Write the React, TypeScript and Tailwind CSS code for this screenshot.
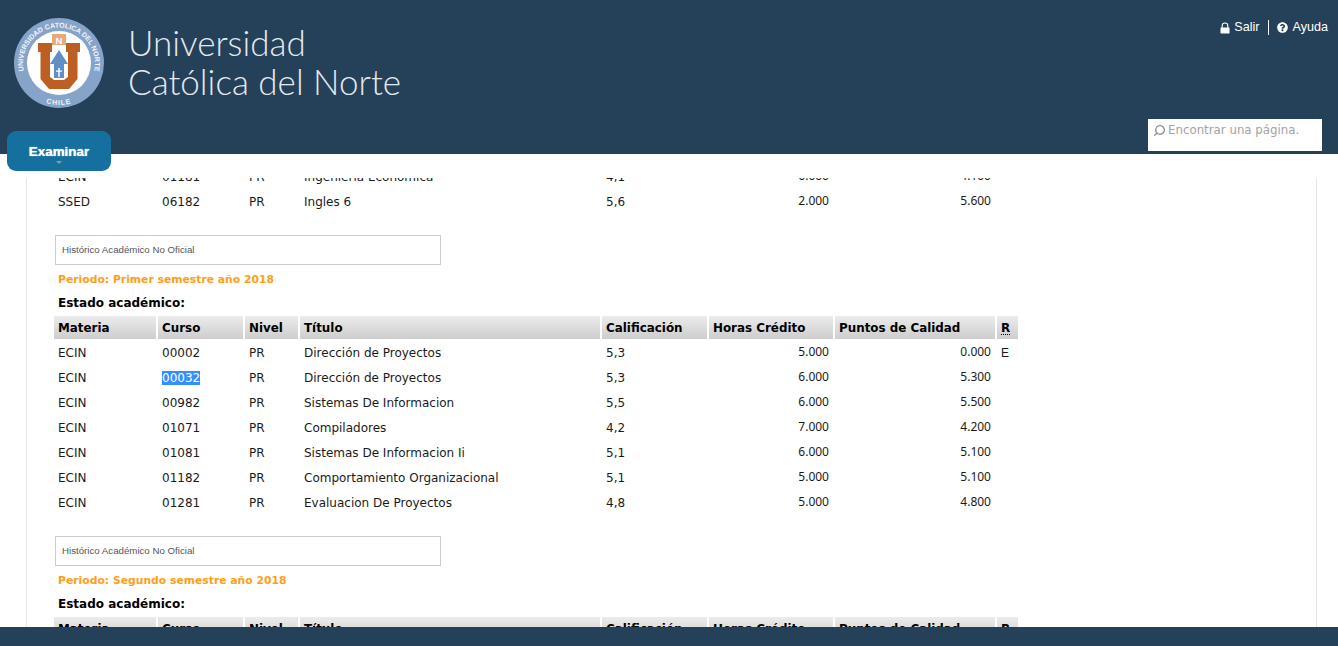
import { FaQuestionCircle } from "react-icons/fa"
import { Search } from "lucide-react"

type Row = {
  materia: string
  curso: string
  titulo: string
  nota: string
  horas: string
  puntos: string
  r?: string
  selected?: boolean
}

const topRows: Row[] = [
  { materia: "ECIN", curso: "01181", titulo: "Ingeniería Económica", nota: "4,1", horas: "6.000", puntos: "4.100" },
  { materia: "SSED", curso: "06182", titulo: "Ingles 6", nota: "5,6", horas: "2.000", puntos: "5.600" },
]

const rows2018: Row[] = [
  { materia: "ECIN", curso: "00002", titulo: "Dirección de Proyectos", nota: "5,3", horas: "5.000", puntos: "0.000", r: "E" },
  { materia: "ECIN", curso: "00032", titulo: "Dirección de Proyectos", nota: "5,3", horas: "6.000", puntos: "5.300", selected: true },
  { materia: "ECIN", curso: "00982", titulo: "Sistemas De Informacion", nota: "5,5", horas: "6.000", puntos: "5.500" },
  { materia: "ECIN", curso: "01071", titulo: "Compiladores", nota: "4,2", horas: "7.000", puntos: "4.200" },
  { materia: "ECIN", curso: "01081", titulo: "Sistemas De Informacion Ii", nota: "5,1", horas: "6.000", puntos: "5.100" },
  { materia: "ECIN", curso: "01182", titulo: "Comportamiento Organizacional", nota: "5,1", horas: "5.000", puntos: "5.100" },
  { materia: "ECIN", curso: "01281", titulo: "Evaluacion De Proyectos", nota: "4,8", horas: "5.000", puntos: "4.800" },
]

const headers = ["Materia", "Curso", "Nivel", "Título", "Calificación", "Horas Crédito", "Puntos de Calidad"]

function Logo() {
  return (
    <svg width="92" height="92" viewBox="0 0 92 92" className="shrink-0">
      <defs>
        <path id="arcTop" d="M 20 71.5 A 36 36 0 1 1 72 71.5" />
        <path id="arcBottom" d="M 25 82.4 A 42 42 0 0 0 67 82.4" />
      </defs>
      <circle cx="46" cy="46" r="45" fill="#86a3c9" />
      <circle cx="46" cy="46" r="32" fill="#ffffff" />
      <text fill="#f2f5f9" fontSize="7" fontWeight="700" fontFamily="'Liberation Sans', sans-serif">
        <textPath href="#arcTop" startOffset="50%" textAnchor="middle">UNIVERSIDAD CATOLICA DEL NORTE</textPath>
      </text>
      <text fill="#f2f5f9" fontSize="7" fontWeight="700" letterSpacing="1" fontFamily="'Liberation Sans', sans-serif">
        <textPath href="#arcBottom" startOffset="50%" textAnchor="middle">CHILE</textPath>
      </text>
      <path d="M39 17h14v11H39z" fill="#e8a878" />
      <text x="46" y="26.5" textAnchor="middle" fill="#ffffff" fontSize="9.5" fontWeight="700" fontFamily="'Liberation Sans', sans-serif">N</text>
      <path
        d="M25 26H39V35H37V60L41 63H51L55 60V35H53V26H67V35H64.5V62L56 72H36L27.5 62V35H25Z"
        fill="#bd5f22"
      />
      <path d="M46 33L55 47H51V61H41V47H37Z" fill="#5f8fc4" />
      <path d="M45.3 51h1.4v2.5h2.3v1.3h-2.3V60h-1.4v-5.2H43v-1.3h2.3z" fill="#ffffff" />
    </svg>
  )
}

function LockIcon() {
  return (
    <svg width="10" height="12" viewBox="0 0 10 12">
      <path d="M2.2 6V3.8a2.8 2.8 0 0 1 5.6 0V6" fill="none" stroke="#ffffff" strokeWidth="1.1" />
      <rect x="0.5" y="5.5" width="9" height="6" rx="0.6" fill="#ffffff" />
    </svg>
  )
}

function GradeTable({ rows, withHeader = true }: { rows: Row[]; withHeader?: boolean }) {
  return (
    <table className="w-[968px] table-fixed border-separate border-spacing-[2px] text-[12px] text-[#1a1a1a] font-['DejaVu_Sans',sans-serif]">
      <colgroup>
        <col className="w-[102px]" />
        <col className="w-[85px]" />
        <col className="w-[53px]" />
        <col className="w-[300px]" />
        <col className="w-[105px]" />
        <col className="w-[124px]" />
        <col className="w-[160px]" />
        <col className="w-[21px]" />
      </colgroup>
      {withHeader && (
        <thead>
          <tr className="h-[23px]">
            {headers.map((h) => (
              <th key={h} className="bg-gradient-to-b from-[#ececec] to-[#cdcdcd] px-1 pt-[2px] text-left text-[11.9px] font-bold text-black">
                {h}
              </th>
            ))}
            <th className="bg-gradient-to-b from-[#ececec] to-[#cdcdcd] px-1 pt-[2px] text-left text-[11.9px] font-bold text-black">
              <span className="underline decoration-dotted underline-offset-2">R</span>
            </th>
          </tr>
        </thead>
      )}
      <tbody>
        {rows.map((row) => (
          <tr key={row.curso} className="h-[23px]">
            <td className="px-1">{row.materia}</td>
            <td className="px-1">
              {row.selected ? <span className="bg-[#3390ff] text-white">{row.curso}</span> : row.curso}
            </td>
            <td className="px-1">PR</td>
            <td className="px-1">{row.titulo}</td>
            <td className="px-1">{row.nota}</td>
            <td className="px-1 pb-[2px] text-right font-['Noto_Sans',sans-serif]">{row.horas}</td>
            <td className="px-1 pb-[2px] text-right font-['Noto_Sans',sans-serif]">{row.puntos}</td>
            <td className="px-1 font-['Liberation_Sans',sans-serif]">{row.r}</td>
          </tr>
        ))}
      </tbody>
    </table>
  )
}

function Period({ title }: { title: string }) {
  return (
    <>
      <div className="ml-[28px] flex h-[30px] w-[386px] items-center border border-[#cccccc] pl-[6px] font-['Liberation_Sans',sans-serif] text-[9.7px] text-[#555555]">
        Histórico Académico No Oficial
      </div>
      <p className="ml-[31px] mt-[8px] font-['DejaVu_Sans',sans-serif] text-[10.8px] leading-[14px] font-bold text-[#ff9e18]">
        {title}
      </p>
      <p className="ml-[31px] mt-[9px] font-['DejaVu_Sans',sans-serif] text-[12px] leading-[14px] font-bold text-black">
        Estado académico:
      </p>
    </>
  )
}

export default function App() {
  return (
    <div className="relative flex h-[646px] w-[1338px] flex-col overflow-hidden bg-white">
      <header className="flex h-[154px] shrink-0 justify-between bg-[#254059]">
        <div className="flex items-start pl-[13px] pt-[17px]">
          <Logo />
          <div className="ml-[23px] mt-[6px] font-['Lato',sans-serif] text-[35px] leading-[39px] font-light text-[#e3e9ee]">
            <div>Universidad</div>
            <div>Católica del Norte</div>
          </div>
        </div>
        <div className="flex flex-col items-end justify-between pr-[10px] pb-[3px] pt-[20px]">
          <div className="flex h-[15px] items-center font-['Liberation_Sans',sans-serif] text-[12.6px] text-white">
            <LockIcon />
            <span className="ml-[4px]">Salir</span>
            <span className="mx-[8px] h-[15px] w-px bg-white" />
            <FaQuestionCircle className="h-[11px] w-[11px]" />
            <span className="ml-[5px]">Ayuda</span>
          </div>
          <div className="mr-[6px] flex h-[32px] w-[174px] items-start bg-white pl-[5px] pt-[4px]">
            <Search className="mt-[1px] h-[13px] w-[13px] shrink-0 -scale-x-100 text-[#8f8f8f]" strokeWidth={2.6} />
            <input
              placeholder="Encontrar una página."
              className="ml-[2px] w-[150px] bg-transparent font-['DejaVu_Sans',sans-serif] text-[11.8px] leading-[14px] outline-none placeholder:text-[#a3a3a3]"
            />
          </div>
        </div>
      </header>

      <button className="absolute left-[7px] top-[131px] h-[40px] w-[104px] rounded-[9px] bg-[#15709f] pt-[2px] font-['Liberation_Sans',sans-serif] text-[13.4px] font-bold text-white [text-shadow:0_0_1px_#ffffff]">
        Examinar
        <span className="absolute left-[49px] top-[30px] h-0 w-0 border-x-[3px] border-t-[3px] border-x-transparent border-t-[#8a9aa8]" />
      </button>

      <main className="min-h-0 flex-1 pt-[24px]">
        <div className="ml-[26px] mr-[21px] h-full overflow-hidden border-x border-[#e5e5e5]">
          <div className="-mt-[15px] pl-[25px]">
            <GradeTable rows={topRows} withHeader={false} />
          </div>
          <div className="mt-[20px]">
            <Period title="Periodo: Primer semestre año 2018" />
            <div className="mt-[4px] pl-[25px]">
              <GradeTable rows={rows2018} />
            </div>
          </div>
          <div className="mt-[20px]">
            <Period title="Periodo: Segundo semestre año 2018" />
            <div className="mt-[4px] pl-[25px]">
              <GradeTable rows={rows2018} />
            </div>
          </div>
        </div>
      </main>

      <footer className="h-[19px] shrink-0 bg-[#254059]" />
    </div>
  )
}
